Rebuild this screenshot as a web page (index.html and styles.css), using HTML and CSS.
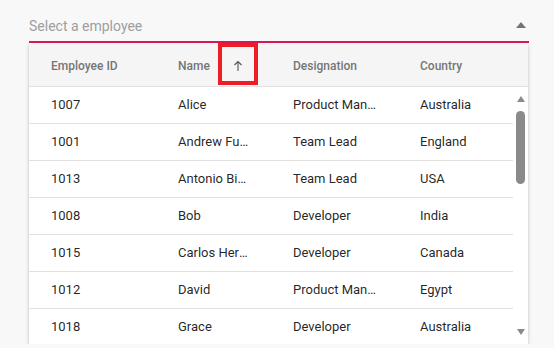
FILE: index.html
```html
<!DOCTYPE html>
<html lang="en">
<head>
    <meta charset="UTF-8">
    <meta name="viewport" content="width=device-width, initial-scale=1.0">
    <title>Employee Dropdown</title>
    <link rel="stylesheet" href="styles.css">
</head>
<body>
    <div class="dropdown">
        <div class="input">
            <span class="placeholder">Select a employee</span>
            <span class="caret"></span>
        </div>

        <div class="popup">
            <!-- Grid header -->
            <div class="grid-header">
                <div class="cell">Employee ID</div>
                <div class="cell sorted">
                    Name
                    <span class="sort-icon">
                        <svg width="10" height="12" viewBox="0 0 10 12">
                            <path d="M5 1.5 V11 M1.5 5 L5 1.5 L8.5 5" fill="none" stroke="#555" stroke-width="1.1"/>
                        </svg>
                    </span>
                    <span class="highlight"></span>
                </div>
                <div class="cell">Designation</div>
                <div class="cell">Country</div>
            </div>

            <!-- Grid body -->
            <div class="grid-body">
                <div class="rows">
                    <div class="row"><div class="cell">1007</div><div class="cell">Alice</div><div class="cell">Product Manager</div><div class="cell">Australia</div></div>
                    <div class="row"><div class="cell">1001</div><div class="cell">Andrew Fuller</div><div class="cell">Team Lead</div><div class="cell">England</div></div>
                    <div class="row"><div class="cell">1013</div><div class="cell">Antonio Bianchi</div><div class="cell">Team Lead</div><div class="cell">USA</div></div>
                    <div class="row"><div class="cell">1008</div><div class="cell">Bob</div><div class="cell">Developer</div><div class="cell">India</div></div>
                    <div class="row"><div class="cell">1015</div><div class="cell">Carlos Hernandez</div><div class="cell">Developer</div><div class="cell">Canada</div></div>
                    <div class="row"><div class="cell">1012</div><div class="cell">David</div><div class="cell">Product Manager</div><div class="cell">Egypt</div></div>
                    <div class="row"><div class="cell">1018</div><div class="cell">Grace</div><div class="cell">Developer</div><div class="cell">Australia</div></div>
                </div>
                <div class="scrollbar">
                    <span class="arrow up"></span>
                    <span class="thumb"></span>
                    <span class="arrow down"></span>
                </div>
            </div>
        </div>
    </div>
</body>
</html>
```

FILE: styles.css
```css
* {
    margin: 0;
    padding: 0;
    box-sizing: border-box;
}

body {
    background: #f8f8f8;
    font-family: Roboto, "Liberation Sans", sans-serif;
    padding-left: 29px;
}

.dropdown {
    width: 500px;
}

.input {
    height: 43px;
    border-bottom: 2px solid #e3165b;
    display: flex;
    align-items: flex-end;
    justify-content: space-between;
    padding-bottom: 7px;
}

.placeholder {
    font-size: 14px;
    color: #9e9e9e;
    line-height: 16px;
}

.caret {
    width: 0;
    height: 0;
    border-left: 5.5px solid transparent;
    border-right: 5.5px solid transparent;
    border-bottom: 6px solid #757575;
    margin-right: 3px;
    margin-bottom: 6px;
}

.popup {
    width: 499px;
    background: #fff;
    box-shadow: 0 2px 4px rgba(0, 0, 0, 0.18), 0 0 2px rgba(0, 0, 0, 0.08);
}

.grid-header,
.row {
    display: grid;
    grid-template-columns: 128px 115px 127px 1fr;
}

.cell {
    padding: 0 21px;
    white-space: nowrap;
    overflow: hidden;
    text-overflow: ellipsis;
}

.grid-header .cell:first-child,
.row .cell:first-child {
    padding-left: 22px;
}

.grid-header {
    height: 44px;
    background: #f5f5f5;
    border-bottom: 1px solid #e0e0e0;
    padding-right: 15px;
}

.grid-header .cell {
    font-size: 12px;
    font-weight: 500;
    color: #757575;
    line-height: 44px;
    padding-top: 1px;
}

.grid-header .sorted {
    position: relative;
    overflow: visible;
}

.sort-icon {
    position: absolute;
    left: 76px;
    top: 17px;
    display: block;
    line-height: 0;
}

.sort-icon svg {
    display: block;
}

/* red annotation box over the sort icon */
.highlight {
    position: absolute;
    left: 61px;
    top: 0;
    width: 40px;
    height: 42px;
    border: 4px solid #ee1c25;
}

.grid-body {
    display: flex;
    height: 257px;
    overflow: hidden;
}

.rows {
    flex: 1;
}

.row {
    height: 37px;
    border-bottom: 1px solid #e0e0e0;
}

.row .cell {
    font-size: 13px;
    color: rgba(0, 0, 0, 0.87);
    line-height: 36px;
}

.scrollbar {
    width: 15px;
    display: flex;
    flex-direction: column;
    align-items: center;
    padding: 9px 0;
}

.arrow {
    width: 0;
    height: 0;
    border-left: 4.5px solid transparent;
    border-right: 4.5px solid transparent;
}

.arrow.up {
    border-bottom: 6px solid #8a8a8a;
}

.arrow.down {
    border-top: 6px solid #8a8a8a;
    margin-top: auto;
}

.thumb {
    width: 9px;
    height: 73px;
    margin-top: 9px;
    border-radius: 5px;
    background: #8a8a8a;
}
```
